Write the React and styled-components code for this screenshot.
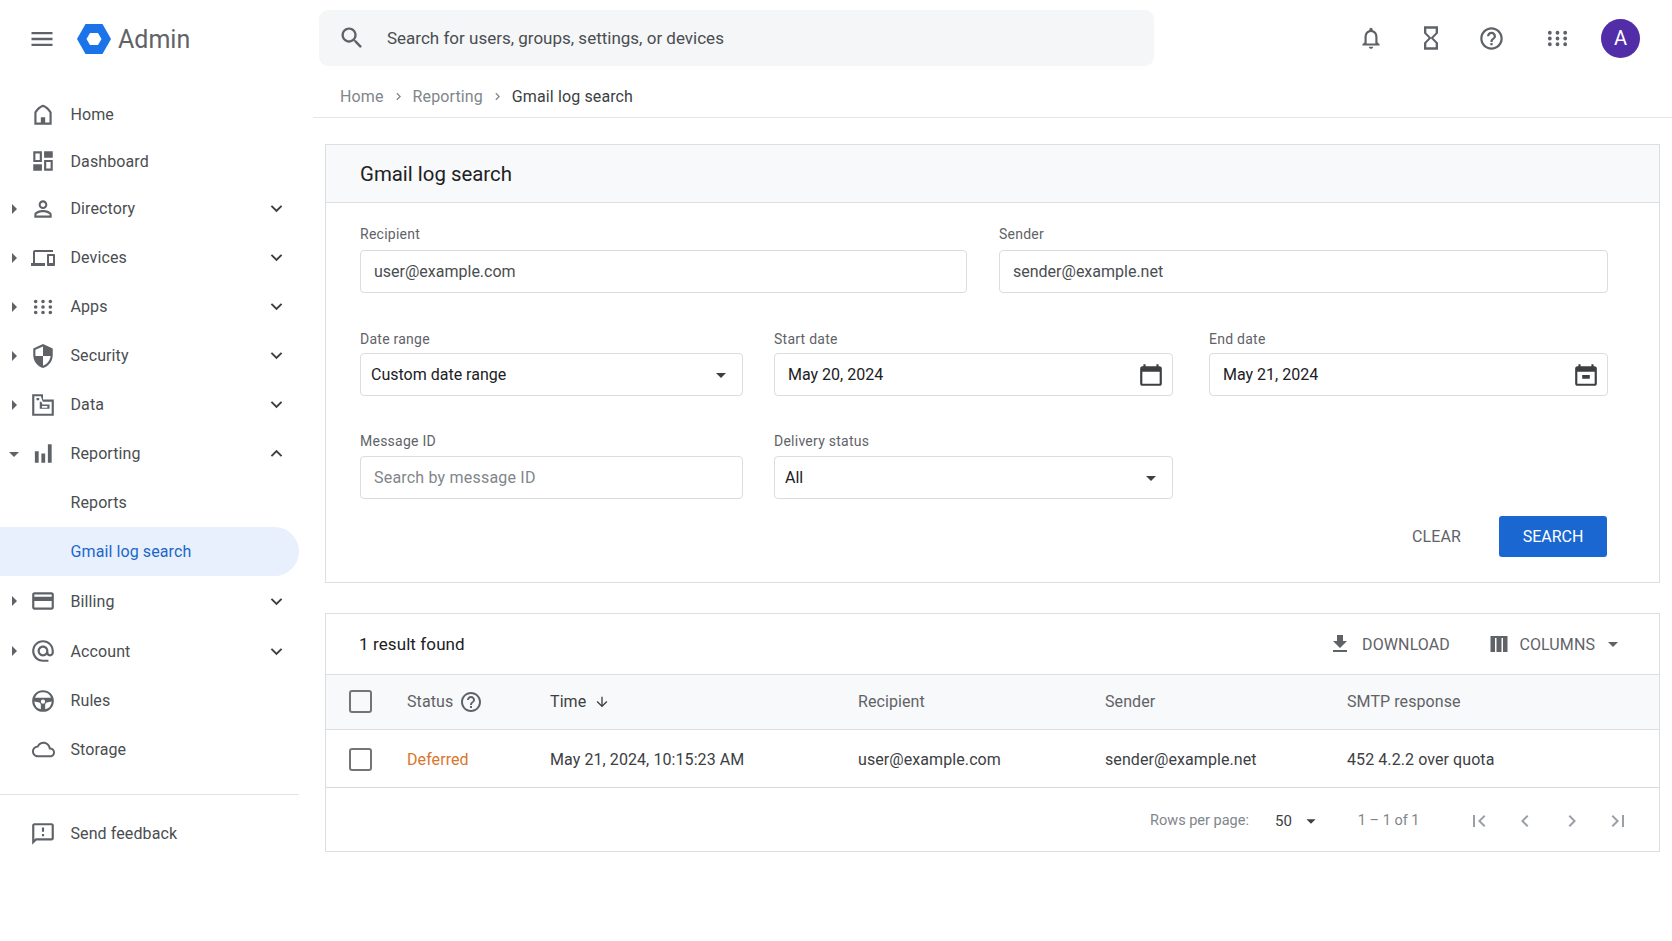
import React from "react";
import styled, { createGlobalStyle } from "styled-components";

const paths = {
  menu: "M3 18h18v-2H3v2zm0-5h18v-2H3v2zm0-7v2h18V6H3z",
  search:
    "M15.5 14h-.79l-.28-.27C15.41 12.59 16 11.11 16 9.5 16 5.91 13.09 3 9.5 3S3 5.91 3 9.5 5.91 16 9.5 16c1.61 0 3.09-.59 4.23-1.57l.27.28v.79l5 4.99L20.49 19l-4.99-5zm-6 0C7.01 14 5 11.99 5 9.5S7.01 5 9.5 5 14 7.01 14 9.5 11.99 14 9.5 14z",
  bell: "M12 22c1.1 0 2-.9 2-2h-4c0 1.1.9 2 2 2zm6-6v-5c0-3.07-1.63-5.64-4.5-6.32V4c0-.83-.67-1.5-1.5-1.5s-1.5.67-1.5 1.5v.68C7.64 5.36 6 7.92 6 11v5l-2 2v1h16v-1l-2-2zm-2 1H8v-6c0-2.48 1.51-4.5 4-4.5s4 2.02 4 4.5v6z",
  hourglass:
    "M6 2v6h.01L6 8.01 10 12l-4 4 .01.01H6V22h12v-5.99h-.01L18 16l-4-4 4-3.99-.01-.01H18V2H6zm10 14.5V20H8v-3.5l4-4 4 4zm-4-5l-4-4V4h8v3.5l-4 4z",
  help: "M11 18h2v-2h-2v2zm1-16C6.48 2 2 6.48 2 12s4.48 10 10 10 10-4.48 10-10S17.52 2 12 2zm0 18c-4.41 0-8-3.59-8-8s3.59-8 8-8 8 3.59 8 8-3.59 8-8 8zm0-14c-2.21 0-4 1.79-4 4h2c0-1.1.9-2 2-2s2 .9 2 2c0 2-3 1.75-3 5h2c0-2.25 3-2.5 3-5 0-2.21-1.79-4-4-4z",
  grid: "M4 8a2 2 0 1 0 0-4 2 2 0 0 0 0 4zm8 0a2 2 0 1 0 0-4 2 2 0 0 0 0 4zm8 0a2 2 0 1 0 0-4 2 2 0 0 0 0 4zM4 14a2 2 0 1 0 0-4 2 2 0 0 0 0 4zm8 0a2 2 0 1 0 0-4 2 2 0 0 0 0 4zm8 0a2 2 0 1 0 0-4 2 2 0 0 0 0 4zM4 20a2 2 0 1 0 0-4 2 2 0 0 0 0 4zm8 0a2 2 0 1 0 0-4 2 2 0 0 0 0 4zm8 0a2 2 0 1 0 0-4 2 2 0 0 0 0 4z",
  home: "M12 2.5C9.5 3 5.5 6 4 9.5V21h16V9.5C18.5 6 14.5 3 12 2.5zm0 2.1c2 .6 4.8 3 6 5.3V19H6V9.9c1.2-2.3 4-4.7 6-5.3zM10 14h4v5h-4z",
  dashboard:
    "M3 3h8v10H3V3zm2 2v6h4V5H5zm8-2h8v6h-8V3zM3 15h8v6H3v-6zm10-4h8v10h-8V11zm2 2v6h4v-6h-4z",
  person:
    "M12 5.9c1.16 0 2.1.94 2.1 2.1s-.94 2.1-2.1 2.1S9.9 9.16 9.9 8s.94-2.1 2.1-2.1m0 9c2.97 0 6.1 1.46 6.1 2.1v1.1H5.9V17c0-.64 3.13-2.1 6.1-2.1M12 4C9.79 4 8 5.79 8 8s1.79 4 4 4 4-1.79 4-4-1.79-4-4-4zm0 9c-2.67 0-8 1.34-8 4v3h16v-3c0-2.66-5.33-4-8-4z",
  devices:
    "M4 6h18V4H4c-1.1 0-2 .9-2 2v11H0v3h14v-3H4V6zm19 2h-6c-.55 0-1 .45-1 1v10c0 .55.45 1 1 1h6c.55 0 1-.45 1-1V9c0-.55-.45-1-1-1zm-1 9h-4v-7h4v7z",
  security:
    "M12 1L3 5v6c0 5.55 3.84 10.74 9 12 5.16-1.26 9-6.45 9-12V5l-9-4zm0 10.99h7c-.53 4.12-3.28 7.79-7 8.94V12H5V6.3l7-3.11v8.8z",
  data: "M3 2h9v5h10v15H2V2h1zm1 2v16h16V9h-8.2L10 4H4zm2 1.5h2.5v2H6v-2zm3 3.5h1.5l1 2.5H18v4H9V9zm2 4v1.5h5V13h-5z",
  reporting: "M4.5 9.5H8V20H4.5V9.5zm6 2H14V20h-3.5v-8.5zm6-8.5H20v17h-3.5V3z",
  billing:
    "M20 4H4c-1.11 0-1.99.89-1.99 2L2 18c0 1.11.89 2 2 2h16c1.11 0 2-.89 2-2V6c0-1.11-.89-2-2-2zm0 14H4v-6h16v6zm0-10H4V6h16v2z",
  account:
    "M12 2C6.48 2 2 6.48 2 12s4.48 10 10 10h5v-2h-5c-4.34 0-8-3.66-8-8s3.66-8 8-8 8 3.66 8 8v1.43c0 .79-.71 1.57-1.5 1.57s-1.5-.78-1.5-1.57V12c0-2.76-2.24-5-5-5s-5 2.24-5 5 2.24 5 5 5c1.38 0 2.64-.56 3.54-1.47.65.89 1.77 1.47 2.96 1.47 1.97 0 3.5-1.6 3.5-3.57V12c0-5.52-4.48-10-10-10zm0 13c-1.66 0-3-1.34-3-3s1.34-3 3-3 3 1.34 3 3-1.34 3-3 3z",
  rules:
    "M12 2a10 10 0 1 0 0 20 10 10 0 0 0 0-20zm0 2a8 8 0 0 1 7.4 5H4.6A8 8 0 0 1 12 4zM4 12.5l4.6.9c.9.4 1.4 1.3 1.4 2.3v4a8 8 0 0 1-6-7.2zm10 7.2v-4c0-1 .5-1.9 1.4-2.3l4.6-.9a8 8 0 0 1-6 7.2zM12 10.5a2 2 0 1 0 0 4 2 2 0 0 0 0-4z",
  cloud:
    "M19.35 10.04C18.67 6.59 15.64 4 12 4 9.11 4 6.6 5.64 5.35 8.04 2.34 8.36 0 10.91 0 14c0 3.31 2.69 6 6 6h13c2.76 0 5-2.24 5-5 0-2.64-2.05-4.78-4.65-4.96zM19 18H6c-2.21 0-4-1.79-4-4 0-2.05 1.53-3.76 3.56-3.97l1.07-.11.5-.95C8.08 7.14 9.94 6 12 6c2.62 0 4.88 1.86 5.39 4.43l.3 1.5 1.53.11c1.56.1 2.78 1.41 2.78 2.96 0 1.65-1.35 3-3 3z",
  feedback:
    "M20 2H4c-1.1 0-2 .9-2 2v18l4-4h14c1.1 0 2-.9 2-2V4c0-1.1-.9-2-2-2zm0 14H5.17L4 17.17V4h16v12zM11 12h2v2h-2zm0-6h2v4h-2z",
  chevronDown: "M7.41 8.59L12 13.17l4.59-4.58L18 10l-6 6-6-6z",
  chevronUp: "M7.41 15.41L12 10.83l4.59 4.58L18 14l-6-6-6 6z",
  caretDown: "M7 10l5 5 5-5z",
  caretRight: "M10 17l5-5-5-5v10z",
  crumb: "M10 6L8.59 7.41 13.17 12l-4.58 4.59L10 18l6-6z",
  download: "M19 9h-4V3H9v6H5l7 7 7-7zM5 18v2h14v-2H5z",
  columns: "M3.5 4h17v16H16V6h-1.5v14h-5V6H8v14H3.5V4z",
  arrowDown:
    "M20 12l-1.41-1.41L13 16.17V4h-2v12.17l-5.58-5.59L4 12l8 8 8-8z",
  calendar:
    "M20 4h-1V2h-2v2H7V2H5v2H4c-1.1 0-2 .9-2 2v14c0 1.1.9 2 2 2h16c1.1 0 2-.9 2-2V6c0-1.1-.9-2-2-2zm0 16H4V9h16v11z",
  calendarEnd:
    "M20 4h-1V2h-2v2H7V2H5v2H4c-1.1 0-2 .9-2 2v14c0 1.1.9 2 2 2h16c1.1 0 2-.9 2-2V6c0-1.1-.9-2-2-2zm0 16H4V9h16v11zM8.5 12h7v3.5h-7V12z",
  firstPage: "M18.41 16.59L13.82 12l4.59-4.59L17 6l-6 6 6 6zM6 6h2v12H6z",
  prevPage: "M15.41 7.41L14 6l-6 6 6 6 1.41-1.41L10.83 12z",
  nextPage: "M10 6L8.59 7.41 13.17 12l-4.58 4.59L10 18l6-6z",
  lastPage: "M5.59 7.41L10.18 12l-4.59 4.59L7 18l6-6-6-6zM16 6h2v12h-2z",
};

const navItems = [
  { label: "Home", icon: "home", height: 47 },
  { label: "Dashboard", icon: "dashboard", height: 46 },
  { label: "Directory", icon: "person", expandable: true },
  { label: "Devices", icon: "devices", iconSize: 24, expandable: true },
  { label: "Apps", icon: "grid", iconSize: 22, expandable: true },
  { label: "Security", icon: "security", expandable: true },
  { label: "Data", icon: "data", expandable: true },
  { label: "Reporting", icon: "reporting", expandable: true, open: true },
  { label: "Reports" },
  { label: "Gmail log search", active: true },
  { label: "Billing", icon: "billing", expandable: true, height: 50 },
  { label: "Account", icon: "account", expandable: true, height: 50 },
  { label: "Rules", icon: "rules" },
  { label: "Storage", icon: "cloud", iconSize: 23 },
];

const Icon = ({ name, size = 24, color = "#5f6368" }) => (
  <Svg viewBox="0 0 24 24" $size={size} $color={color}>
    <path d={paths[name]} fillRule="evenodd" />
  </Svg>
);

const App = () => {
  return (
    <Page>
      <GlobalStyle />
      <Sidebar>
        <Brand>
          <MenuButton>
            <Icon name="menu" size={28} />
          </MenuButton>
          <LogoMark viewBox="0 0 34 30">
            <polygon points="0,15 8.5,0 25.5,0 34,15 25.5,30 8.5,30" fill="#1a73e8" />
            <polygon points="9.5,15 13,9 21,9 24.5,15 21,21 13,21" fill="#fff" />
          </LogoMark>
          <BrandName>Admin</BrandName>
        </Brand>

        <Nav>
          {navItems.map((item) => (
            <NavRow key={item.label} $height={item.height} $active={item.active}>
              <CaretSlot>
                {item.expandable && (
                  <Icon name={item.open ? "caretDown" : "caretRight"} size={24} />
                )}
              </CaretSlot>
              <NavIcon>
                {item.icon && <Icon name={item.icon} size={item.iconSize || 26} />}
              </NavIcon>
              <NavLabel $active={item.active}>{item.label}</NavLabel>
              {item.expandable && (
                <NavChevron>
                  <Icon name={item.open ? "chevronUp" : "chevronDown"} size={23} color="#3c4043" />
                </NavChevron>
              )}
            </NavRow>
          ))}
        </Nav>

        <NavDivider />

        <NavRow>
          <CaretSlot />
          <NavIcon>
            <Icon name="feedback" size={26} />
          </NavIcon>
          <NavLabel>Send feedback</NavLabel>
        </NavRow>
      </Sidebar>

      <Main>
        <TopBar>
          <SearchBar>
            <Icon name="search" size={28} />
            <SearchText>Search for users, groups, settings, or devices</SearchText>
          </SearchBar>
          <TopActions>
            <TopIcon $width={60}>
              <Icon name="bell" size={26} />
            </TopIcon>
            <TopIcon $width={60}>
              <Icon name="hourglass" size={28} />
            </TopIcon>
            <TopIcon $width={60}>
              <Icon name="help" size={27} />
            </TopIcon>
            <TopIcon $width={73}>
              <Icon name="grid" size={23} />
            </TopIcon>
            <Avatar>A</Avatar>
          </TopActions>
        </TopBar>

        <Breadcrumbs>
          <CrumbLink>Home</CrumbLink>
          <Icon name="crumb" size={15} color="#80868b" />
          <CrumbLink>Reporting</CrumbLink>
          <Icon name="crumb" size={15} color="#80868b" />
          <CrumbCurrent>Gmail log search</CrumbCurrent>
        </Breadcrumbs>

        <Content>
          <Card>
            <CardHeader>
              <CardTitle>Gmail log search</CardTitle>
            </CardHeader>
            <Form>
              <FormRow $columns="607px 609px" $gap="32px" $labelGap={6}>
                <Field>
                  <FieldLabel>Recipient</FieldLabel>
                  <InputBox>
                    <InputValue>user@example.com</InputValue>
                  </InputBox>
                </Field>
                <Field>
                  <FieldLabel>Sender</FieldLabel>
                  <InputBox>
                    <InputValue>sender@example.net</InputValue>
                  </InputBox>
                </Field>
              </FormRow>

              <FormRow $columns="383px 399px 404px" $gap="31px" $top={36} $labelGap={4}>
                <Field>
                  <FieldLabel>Date range</FieldLabel>
                  <InputBox $select>
                    <SelectValue>Custom date range</SelectValue>
                    <Icon name="caretDown" size={24} color="#3c4043" />
                  </InputBox>
                </Field>
                <Field>
                  <FieldLabel>Start date</FieldLabel>
                  <InputBox $date>
                    <DateValue>May 20, 2024</DateValue>
                    <Icon name="calendar" size={26} color="#3c4043" />
                  </InputBox>
                </Field>
                <Field $inset={5}>
                  <FieldLabel>End date</FieldLabel>
                  <InputBox $date>
                    <DateValue>May 21, 2024</DateValue>
                    <Icon name="calendarEnd" size={26} color="#3c4043" />
                  </InputBox>
                </Field>
              </FormRow>

              <FormRow $columns="383px 399px 404px" $gap="31px" $top={35} $labelGap={5}>
                <Field>
                  <FieldLabel>Message ID</FieldLabel>
                  <InputBox>
                    <Placeholder>Search by message ID</Placeholder>
                  </InputBox>
                </Field>
                <Field>
                  <FieldLabel>Delivery status</FieldLabel>
                  <InputBox $select>
                    <SelectValue>All</SelectValue>
                    <Icon name="caretDown" size={24} color="#3c4043" />
                  </InputBox>
                </Field>
              </FormRow>

              <FormActions>
                <ClearButton>CLEAR</ClearButton>
                <SearchButton>SEARCH</SearchButton>
              </FormActions>
            </Form>
          </Card>

          <ResultsCard>
            <Toolbar>
              <ResultCount>1 result found</ResultCount>
              <ToolbarButton $gap={10}>
                <Icon name="download" size={24} />
                <span>DOWNLOAD</span>
              </ToolbarButton>
              <ToolbarButton $gap={8.5} $left={37}>
                <Icon name="columns" size={24} />
                <span>COLUMNS</span>
                <ColumnsCaret>
                  <Icon name="caretDown" size={24} />
                </ColumnsCaret>
              </ToolbarButton>
            </Toolbar>

            <HeaderRow>
              <Checkbox />
              <HeaderCell $gap={6}>
                Status
                <Icon name="help" size={24} />
              </HeaderCell>
              <HeaderCell $gap={8} $dark>
                Time
                <Icon name="arrowDown" size={16} color="#3c4043" />
              </HeaderCell>
              <HeaderCell>Recipient</HeaderCell>
              <HeaderCell>Sender</HeaderCell>
              <HeaderCell>SMTP response</HeaderCell>
            </HeaderRow>

            <DataRow>
              <Checkbox />
              <StatusCell>Deferred</StatusCell>
              <DataCell>May 21, 2024, 10:15:23 AM</DataCell>
              <DataCell>user@example.com</DataCell>
              <DataCell>sender@example.net</DataCell>
              <DataCell>452 4.2.2 over quota</DataCell>
            </DataRow>

            <TableFooter>
              <RowsLabel>Rows per page:</RowsLabel>
              <RowsValue>50</RowsValue>
              <Icon name="caretDown" size={22} color="#3c4043" />
              <PageRange>1 – 1 of 1</PageRange>
              <Pager>
                <Icon name="firstPage" color="#9aa0a6" />
                <Icon name="prevPage" color="#9aa0a6" />
                <Icon name="nextPage" color="#9aa0a6" />
                <Icon name="lastPage" color="#9aa0a6" />
              </Pager>
            </TableFooter>
          </ResultsCard>
        </Content>
      </Main>
    </Page>
  );
};

const GlobalStyle = createGlobalStyle`
  * {
    box-sizing: border-box;
  }

  body {
    margin: 0;
    background: #fff;
    font-family: Roboto, "Noto Sans", sans-serif;
    overflow: hidden;
  }
`;

const Svg = styled.svg`
  width: ${({ $size }) => $size}px;
  height: ${({ $size }) => $size}px;
  fill: ${({ $color }) => $color};
  flex-shrink: 0;
  display: block;
`;

const Page = styled.div`
  display: flex;
  width: 1672px;
  height: 941px;
  overflow: hidden;
`;

const Sidebar = styled.aside`
  width: 313px;
  flex-shrink: 0;
  padding-right: 14px;
`;

const Brand = styled.div`
  display: flex;
  align-items: center;
  height: 78px;
  margin-bottom: 13px;
  padding-left: 28px;
`;

const MenuButton = styled.div`
  width: 49px;
  display: flex;
`;

const LogoMark = styled.svg`
  width: 34px;
  height: 30px;
  margin-right: 7px;
`;

const BrandName = styled.span`
  font-size: 25px;
  color: #5f6368;
`;

const Nav = styled.nav`
  display: flex;
  flex-direction: column;
`;

const NavRow = styled.div`
  display: flex;
  align-items: center;
  height: ${({ $height }) => $height || 49}px;
  padding-right: 21px;
  background: ${({ $active }) => ($active ? "#e8f0fd" : "transparent")};
  border-radius: ${({ $active }) => ($active ? "0 25px 25px 0" : "0")};
`;

const CaretSlot = styled.span`
  width: 29px;
  padding-left: 2px;
  display: flex;
`;

const NavIcon = styled.span`
  width: 41.5px;
  padding-right: 13px;
  display: flex;
  justify-content: center;
`;

const NavLabel = styled.span`
  flex: 1;
  font-size: 16px;
  letter-spacing: 0.1px;
  color: ${({ $active }) => ($active ? "#1a67c9" : "#4a4d51")};
`;

const NavChevron = styled.span`
  display: flex;
  margin-right: -10px;
`;

const NavDivider = styled.hr`
  border: none;
  border-top: 1px solid #e2e3e5;
  margin: 20px 0 14px;
`;

const Main = styled.main`
  flex: 1;
  min-width: 0;
`;

const TopBar = styled.header`
  display: flex;
  align-items: center;
  height: 76px;
  padding: 0 32px 0 6px;
`;

const SearchBar = styled.div`
  display: flex;
  align-items: center;
  gap: 21px;
  width: 835px;
  height: 56px;
  padding-left: 19px;
  background: #f5f6f7;
  border-radius: 9px;
`;

const SearchText = styled.span`
  font-size: 17px;
  color: #4a4d51;
`;

const TopActions = styled.div`
  display: flex;
  align-items: center;
  margin-left: auto;
`;

const TopIcon = styled.span`
  width: ${({ $width }) => $width}px;
  display: flex;
  justify-content: center;
`;

const Avatar = styled.div`
  width: 39px;
  height: 39px;
  margin-left: 7px;
  border-radius: 50%;
  background: #512da8;
  color: #fff;
  font-size: 20px;
  display: flex;
  align-items: center;
  justify-content: center;
`;

const Breadcrumbs = styled.nav`
  display: flex;
  align-items: center;
  gap: 7px;
  height: 42px;
  padding-left: 27px;
  border-bottom: 1px solid #e4e5e7;
  letter-spacing: 0.12px;
`;

const CrumbLink = styled.span`
  font-size: 16px;
  color: #80868b;
`;

const CrumbCurrent = styled.span`
  font-size: 16px;
  color: #3c4043;
`;

const Content = styled.div`
  padding: 26px 12px 0;
`;

const Card = styled.section`
  border: 1px solid #dcdee0;
  background: #fff;
`;

const ResultsCard = styled(Card)`
  margin-top: 30px;
`;

const CardHeader = styled.div`
  height: 58px;
  display: flex;
  align-items: center;
  padding-left: 34px;
  background: #f8f9fa;
  border-bottom: 1px solid #dcdee0;
`;

const CardTitle = styled.h2`
  margin: 0;
  font-size: 20.4px;
  font-weight: 400;
  color: #202124;
`;

const Form = styled.div`
  display: flex;
  flex-direction: column;
  padding: 21px 52px 25px 34px;
`;

const FormRow = styled.div`
  display: grid;
  grid-template-columns: ${({ $columns }) => $columns};
  column-gap: ${({ $gap }) => $gap};
  margin-top: ${({ $top }) => $top || 0}px;
  --label-gap: ${({ $labelGap }) => $labelGap}px;
`;

const Field = styled.label`
  display: flex;
  flex-direction: column;
  gap: var(--label-gap);
  margin-left: ${({ $inset }) => $inset || 0}px;
`;

const FieldLabel = styled.span`
  font-size: 14px;
  line-height: 20px;
  letter-spacing: 0.25px;
  color: #5f6368;
`;

const InputBox = styled.div`
  display: flex;
  align-items: center;
  justify-content: space-between;
  height: 43px;
  padding: 0 ${({ $select, $date }) => ($select ? "9px" : $date ? "8px" : "13px")} 0
    ${({ $select }) => ($select ? "10px" : "13px")};
  border: 1px solid #dadce0;
  border-radius: 4px;
  font-size: 16px;
`;

const InputValue = styled.span`
  color: #4a4d51;
`;

const SelectValue = styled.span`
  color: #202124;
`;

const DateValue = styled.span`
  color: #202124;
`;

const Placeholder = styled.span`
  letter-spacing: 0.2px;
  color: #80868b;
`;

const FormActions = styled.div`
  display: flex;
  align-items: center;
  justify-content: flex-end;
  gap: 38px;
  margin-top: 17px;
`;

const ClearButton = styled.button`
  background: none;
  border: none;
  padding: 0;
  font: inherit;
  font-size: 16px;
  letter-spacing: 0.1px;
  color: #5f6368;
`;

const SearchButton = styled.button`
  width: 108px;
  height: 41px;
  border: none;
  border-radius: 3px;
  background: #1a67d2;
  color: #fff;
  font: inherit;
  font-size: 16px;
`;

const Toolbar = styled.div`
  display: flex;
  align-items: center;
  height: 61px;
  padding: 0 34px 0 33px;
  border-bottom: 1px solid #dcdee0;
`;

const ResultCount = styled.span`
  margin-right: auto;
  font-size: 17px;
  letter-spacing: 0.1px;
  color: #202124;
`;

const ToolbarButton = styled.div`
  display: flex;
  align-items: center;
  gap: ${({ $gap }) => $gap}px;
  margin-left: ${({ $left }) => $left || 0}px;
  font-size: 16px;
  letter-spacing: 0.1px;
  color: #5f6368;
`;

const ColumnsCaret = styled.span`
  display: flex;
  margin-left: -2.5px;
`;

const tableColumns = `
  display: grid;
  grid-template-columns: 58px 143px 308px 247px 242px 1fr;
  align-items: center;
  padding-left: 23px;
  font-size: 16px;
  letter-spacing: 0.08px;
`;

const HeaderRow = styled.div`
  ${tableColumns}
  height: 55px;
  padding-bottom: 1px;
  background: #f8f9fa;
  border-bottom: 1px solid #dcdee0;
`;

const DataRow = styled.div`
  ${tableColumns}
  height: 58px;
  padding-top: 2px;
  border-bottom: 1px solid #d8dadc;
`;

const HeaderCell = styled.div`
  display: flex;
  align-items: center;
  gap: ${({ $gap }) => $gap || 0}px;
  color: ${({ $dark }) => ($dark ? "#3c4043" : "#5f6368")};
`;

const DataCell = styled.div`
  color: #3c4043;
`;

const StatusCell = styled.div`
  color: #d9762b;
`;

const Checkbox = styled.span`
  width: 23px;
  height: 23px;
  border: 2px solid #757575;
  border-radius: 3px;
`;

const TableFooter = styled.div`
  display: flex;
  align-items: center;
  justify-content: flex-end;
  height: 63px;
  padding: 2px 29px 0 0;
`;

const RowsLabel = styled.span`
  font-size: 14.5px;
  color: #80868b;
`;

const RowsValue = styled.span`
  margin: 0 8px 0 26px;
  font-size: 15px;
  color: #3c4043;
`;

const PageRange = styled.span`
  margin: 0 47px 0 36px;
  font-size: 14.5px;
  color: #80868b;
`;

const Pager = styled.div`
  display: flex;
  gap: 22.5px;
`;

export default App;
